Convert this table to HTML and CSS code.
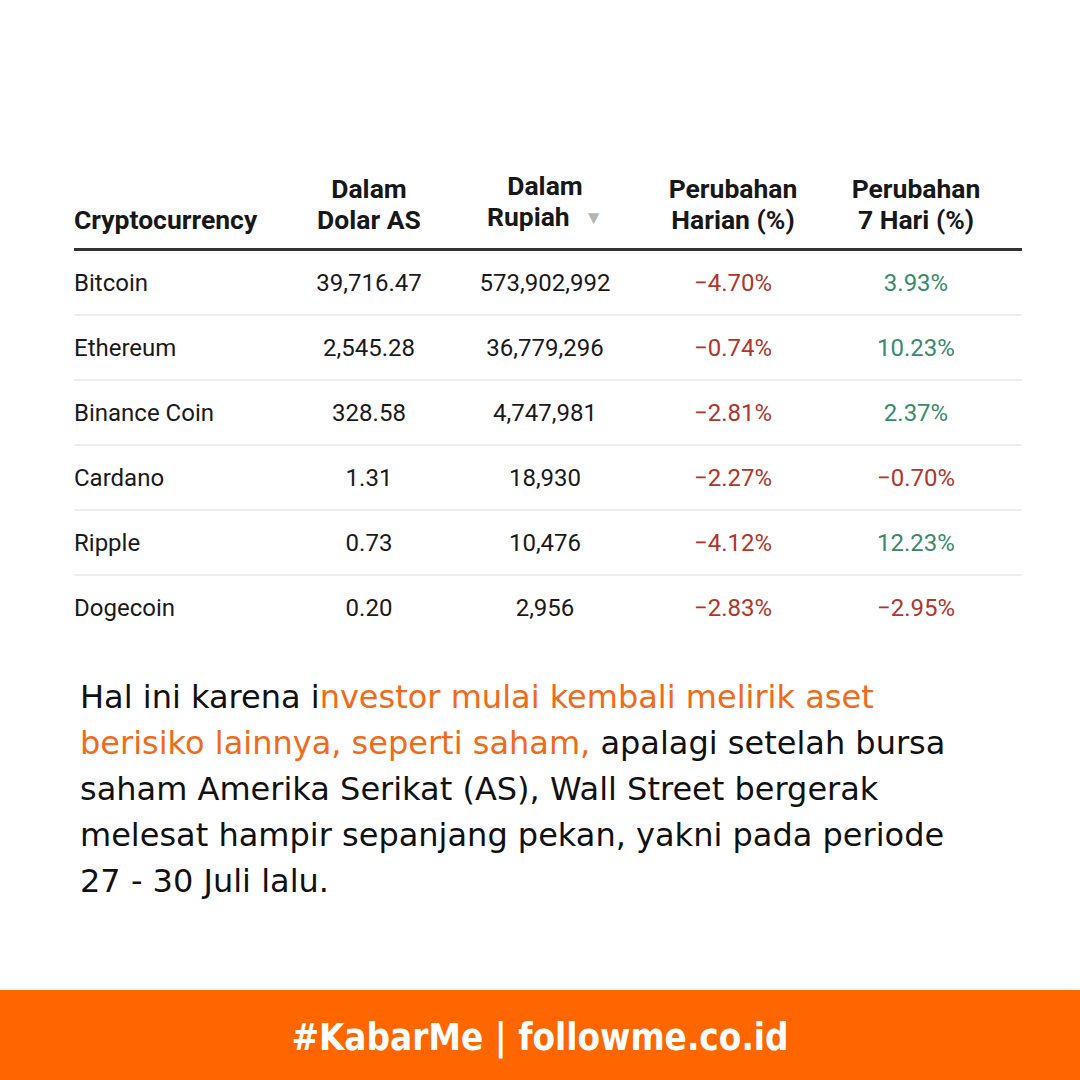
FILE: index.html
```html
<!DOCTYPE html>
<html>
<head>
<meta charset="utf-8">
<link rel="stylesheet" href="styles.css">
</head>
<body>
<div class="page">
  <table class="crypto">
    <thead>
      <tr>
        <th class="name">Cryptocurrency</th>
        <th>Dalam<br>Dolar AS</th>
        <th>Dalam<br>Rupiah <span class="sort">▼</span></th>
        <th>Perubahan<br>Harian (%)</th>
        <th>Perubahan<br>7 Hari (%)</th>
      </tr>
    </thead>
    <tbody>
      <tr><td class="name">Bitcoin</td><td>39,716.47</td><td>573,902,992</td><td class="neg">−4.70%</td><td class="pos">3.93%</td></tr>
      <tr><td class="name">Ethereum</td><td>2,545.28</td><td>36,779,296</td><td class="neg">−0.74%</td><td class="pos">10.23%</td></tr>
      <tr><td class="name">Binance Coin</td><td>328.58</td><td>4,747,981</td><td class="neg">−2.81%</td><td class="pos">2.37%</td></tr>
      <tr><td class="name">Cardano</td><td>1.31</td><td>18,930</td><td class="neg">−2.27%</td><td class="neg">−0.70%</td></tr>
      <tr><td class="name">Ripple</td><td>0.73</td><td>10,476</td><td class="neg">−4.12%</td><td class="pos">12.23%</td></tr>
      <tr><td class="name">Dogecoin</td><td>0.20</td><td>2,956</td><td class="neg">−2.83%</td><td class="neg">−2.95%</td></tr>
    </tbody>
  </table>
  <p class="text">Hal ini karena i<span class="hl">nvestor mulai kembali melirik aset</span><br><span class="hl">berisiko lainnya, seperti saham,</span> apalagi setelah bursa<br>saham Amerika Serikat (AS), Wall Street bergerak<br>melesat hampir sepanjang pekan, yakni pada periode<br>27 - 30 Juli lalu.</p>
</div>
<footer class="bar">#KabarMe | followme.co.id</footer>
</body>
</html>
```
FILE: styles.css
```css
html, body {
  margin: 0;
  padding: 0;
  background: #fff;
}
body {
  width: 1080px;
  height: 1080px;
  display: flex;
  flex-direction: column;
  overflow: hidden;
}
.page {
  flex: 1;
  padding: 167px 58px 0 74px;
}
.crypto {
  width: 948px;
  border-collapse: collapse;
  font-family: Roboto, "Liberation Sans", sans-serif;
  color: #1a1a1a;
}
.crypto th {
  font-weight: 700;
  font-size: 26.5px;
  line-height: 31px;
  text-align: center;
  vertical-align: bottom;
  padding: 3px 0 13px;
  border-bottom: 3px solid #333;
  color: #181818;
}
.crypto th:nth-child(1) { width: 230px; }
.crypto th:nth-child(2) { width: 130px; }
.crypto th:nth-child(3) { width: 222px; }
.crypto th:nth-child(4) { width: 154px; }
.crypto th:nth-child(5) { width: 212px; }
.crypto .name {
  text-align: left;
}
.sort {
  color: #b5b5b5;
  font-size: 19px;
  margin-left: 8px;
  position: relative;
  top: -2px;
}
.crypto td {
  font-size: 24px;
  height: 63px;
  padding: 0;
  text-align: center;
  border-bottom: 2px solid #eeeeee;
  color: #1a1a1a;
}
.crypto tbody tr:last-child td { border-bottom: none; }
.crypto td.neg { color: #b2352e; }
.crypto td.pos { color: #3b8a6d; }
.text {
  margin: 35px 0 0 6px;
  font-family: "DejaVu Sans", sans-serif;
  font-size: 32px;
  line-height: 46px;
  color: #111;
  width: 900px;
}
.hl { color: #f26a1b; }
.bar {
  height: 90px;
  background: #ff6600;
  color: #fff;
  font-family: "DejaVu Sans Condensed", "DejaVu Sans", sans-serif;
  font-weight: 700;
  font-size: 36.5px;
  display: flex;
  align-items: center;
  justify-content: center;
  padding-top: 4px;
  box-sizing: border-box;
}
```
